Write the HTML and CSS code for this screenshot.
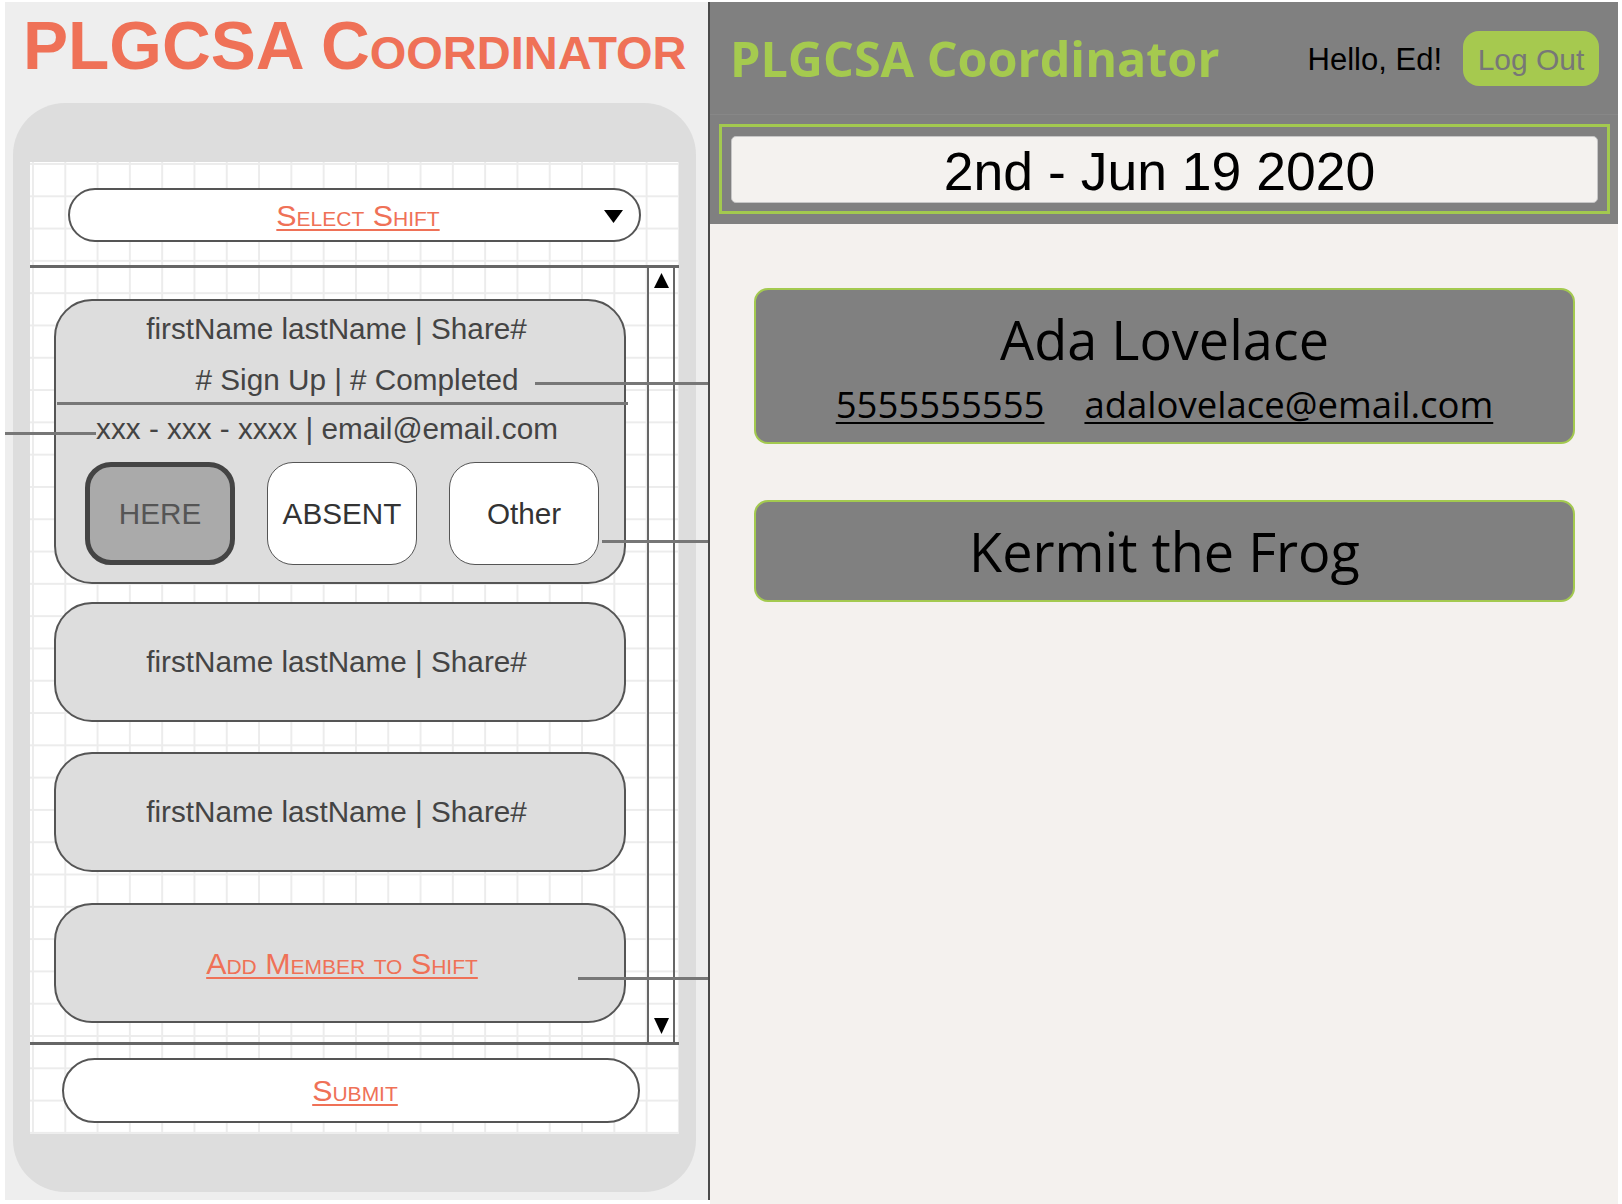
FILE: index.html
```html
<!DOCTYPE html>
<html lang="en">
<head>
<meta charset="utf-8">
<title>PLGCSA Coordinator</title>
<link rel="stylesheet" href="styles.css">
</head>
<body>
<div class="page">
  <section class="wire">
    <h1 class="wire-title">PLGCSA Coordinator</h1>
    <div class="phone">
      <div class="screen">
        <div class="select">
          <span class="link sel-text">Select Shift</span>
          <svg class="caret" width="19" height="13" viewBox="0 0 19 13"><polygon points="0,0 19,0 9.5,13" fill="#000"/></svg>
        </div>
        <div class="scroll">
          <div class="list">
            <div class="card card-open">
              <p class="line l1">firstName lastName | Share#</p>
              <p class="line l2"># Sign Up | # Completed</p>
              <div class="split"></div>
              <p class="line l3">xxx - xxx - xxxx | email@email.com</p>
              <div class="choices">
                <span class="choice here">HERE</span>
                <span class="choice">ABSENT</span>
                <span class="choice">Other</span>
              </div>
            </div>
            <div class="card card-row"><p class="line row-text">firstName lastName | Share#</p></div>
            <div class="card card-row"><p class="line row-text">firstName lastName | Share#</p></div>
            <div class="card card-row"><span class="link add">Add Member to Shift</span></div>
          </div>
          <div class="scrollbar">
            <svg width="15" height="15" viewBox="0 0 15 15"><polygon points="7.5,0 15,15 0,15" fill="#000"/></svg>
            <svg width="15" height="16" viewBox="0 0 15 16"><polygon points="0,0 15,0 7.5,16" fill="#000"/></svg>
          </div>
        </div>
        <div class="submit"><span class="link">Submit</span></div>
      </div>
    </div>
    <i class="note n1"></i>
    <i class="note n2"></i>
    <i class="note n3"></i>
    <i class="note n4"></i>
  </section>

  <section class="app">
    <header class="app-head">
      <div class="bar">
        <h2 class="brand">PLGCSA Coordinator</h2>
        <span class="hello">Hello, Ed!</span>
        <button class="logout">Log Out</button>
      </div>
      <div class="date-frame">
        <div class="date">2nd - Jun 19 2020</div>
      </div>
    </header>
    <main class="members">
      <div class="member member-open">
        <div class="m-name">Ada Lovelace</div>
        <div class="m-contact"><a class="m-link">5555555555</a><a class="m-link">adalovelace@email.com</a></div>
      </div>
      <div class="member member-closed">
        <div class="m-name">Kermit the Frog</div>
      </div>
    </main>
  </section>
</div>
</body>
</html>
```

FILE: styles.css
```css
* { box-sizing: border-box; }

html, body {
  margin: 0;
  padding: 0;
  background: #ffffff;
}

.page {
  display: flex;
  align-items: flex-start;
  padding: 2px 0 0 5px;
  width: 1622px;
  height: 1204px;
  overflow: hidden;
}

/* ---------- Left: wireframe ---------- */
.wire {
  position: relative;
  width: 705px;
  height: 1198px;
  background: #eeeeee;
  border-right: 2px solid #4a4a4a;
  font-family: "Liberation Sans", Arial, sans-serif;
}

.wire-title {
  margin: 4px 0 17px 18px;
  font-size: 67.6px;
  line-height: 80px;
  font-weight: 700;
  font-variant: small-caps;
  color: #ef7157;
  white-space: nowrap;
}

.phone {
  margin-left: 8px;
  width: 683px;
  height: 1089px;
  background: #dddddd;
  border-radius: 52px;
  padding: 59px 0 0 17px;
}

.screen {
  width: 649px;
  height: 972px;
  background-color: #ffffff;
  background-image:
    linear-gradient(to right, #ececec 2px, transparent 2px),
    linear-gradient(to bottom, #ececec 2px, transparent 2px);
  background-size: 32.3px 32.3px;
  background-position: 2px 1px;
  padding-top: 26px;
}

.link {
  color: #ef7157;
  font-variant: small-caps;
  text-decoration: underline;
  text-decoration-thickness: 1.5px;
  text-underline-offset: 3px;
  font-size: 30.4px;
}

.select {
  margin-left: 38px;
  width: 573px;
  height: 54px;
  border: 2px solid #555;
  border-radius: 27px;
  background: #ffffff;
  display: grid;
  grid-template-columns: 1fr auto 1fr;
  align-items: center;
  padding-left: 7px;
}
.sel-text {
  grid-column: 2;
  line-height: 50px;
}
.caret {
  grid-column: 3;
  justify-self: end;
  margin-right: 16px;
  margin-top: 2px;
}

.scroll {
  margin-top: 23px;
  height: 780px;
  border-top: 3px solid #666;
  border-bottom: 3px solid #666;
  display: flex;
}

.list {
  margin-left: 24px;
  width: 572px;
  padding-top: 31px;
  display: flex;
  flex-direction: column;
  gap: 30px;
}

.card {
  background: #dddddd;
  border: 2px solid #555;
  border-radius: 38px;
  color: #444;
  text-align: center;
}
.card-open {
  height: 285px;
  padding-top: 6px;
  margin-bottom: -12px;
}
.card-row {
  height: 120px;
  display: flex;
  align-items: center;
  justify-content: center;
}
.card-row:last-child { margin-top: 1px; }

.line {
  margin: 0;
  font-size: 29.7px;
  line-height: 40px;
  white-space: nowrap;
}
.row-text { padding-right: 7px; }
.l1, .l2 { line-height: 44px; }
.l1 { padding-right: 7px; }
.l2 {
  margin-top: 7px;
  padding-left: 34px;
}
.split {
  height: 3px;
  background: #777;
  margin: 0 -4px 0 1px;
}
.l3 {
  margin-top: 4px;
  padding-right: 26px;
}

.choices {
  margin-top: 13px;
  padding-left: 29px;
  display: flex;
  gap: 32px;
}
.choice {
  width: 150px;
  height: 103px;
  border: 1.5px solid #555;
  border-radius: 26px;
  background: #ffffff;
  display: flex;
  align-items: center;
  justify-content: center;
  font-size: 29.7px;
  color: #333;
}
.choice.here {
  border: 5px solid #444;
  background: #aaaaaa;
  color: #555;
}

.add { line-height: 40px; padding-left: 4px; }

.scrollbar {
  margin-left: 21px;
  width: 28px;
  border-left: 2px solid #666;
  border-right: 2px solid #666;
  display: flex;
  flex-direction: column;
  justify-content: space-between;
  align-items: center;
  padding: 5px 0 8px;
}

.submit {
  margin: 13px 0 0 32px;
  width: 578px;
  height: 65px;
  border: 2px solid #555;
  border-radius: 33px;
  background: #ffffff;
  display: flex;
  align-items: center;
  justify-content: center;
  padding-left: 8px;
}
.submit .link { line-height: 61px; }

.note {
  position: absolute;
  height: 3px;
  background: #777;
}
.n1 { top: 380px; left: 530px; width: 173px; }
.n2 { top: 430px; left: 0; width: 91px; }
.n3 { top: 538px; left: 597px; width: 106px; }
.n4 { top: 975px; left: 573px; width: 130px; }

/* ---------- Right: app ---------- */
.app {
  width: 908px;
  height: 1202px;
  background: #f4f1ee;
}

.app-head {
  height: 222px;
  background: #808080;
}

.bar {
  height: 113px;
  display: flex;
  align-items: center;
  padding: 0 19px 0 20px;
  border-bottom: 1px solid #878787;
}
.brand {
  flex: 1;
  margin: 0;
  font-family: "Open Sans", sans-serif;
  font-weight: 700;
  font-size: 48.5px;
  line-height: 60px;
  color: #a5ca4f;
  white-space: nowrap;
}
.hello {
  font-family: "Liberation Sans", Arial, sans-serif;
  font-size: 31px;
  line-height: 40px;
  color: #000;
  margin: 4px 21px 0 0;
}
.logout {
  width: 136px;
  height: 55px;
  border: 0;
  border-radius: 16px;
  background: #a6c94f;
  color: #777;
  font-family: "Liberation Sans", Arial, sans-serif;
  font-size: 30px;
  padding: 3px 0 0;
}

.date-frame {
  margin: 9px 8px 0 9px;
  height: 90px;
  border: 3px solid #a3c94f;
  padding: 9px 9px 0 9px;
}
.date {
  height: 67px;
  background: #f4f2ef;
  border: 1px solid #c6c6c6;
  border-radius: 5px;
  text-align: center;
  font-family: "Liberation Sans", Arial, sans-serif;
  font-size: 53.5px;
  line-height: 70px;
  color: #000;
  padding-right: 10px;
}

.members {
  display: block;
  padding: 64px 43px 0 44px;
}
.member {
  background: #808080;
  border: 2px solid #a3c94f;
  border-radius: 14px;
  text-align: center;
  color: #000;
  font-family: "Open Sans", sans-serif;
}
.member-open {
  padding: 17px 0 18px;
  height: 156px;
}
.member-closed {
  margin-top: 56px;
  height: 102px;
  padding-top: 17px;
}
.m-name {
  font-size: 54px;
  line-height: 64px;
}
.m-contact {
  margin-top: 9px;
  display: flex;
  justify-content: center;
  gap: 40px;
  font-size: 36.5px;
  line-height: 48px;
}
.m-link {
  color: #000;
  text-decoration: underline;
  text-decoration-thickness: 2px;
  text-underline-offset: 4px;
}
```
